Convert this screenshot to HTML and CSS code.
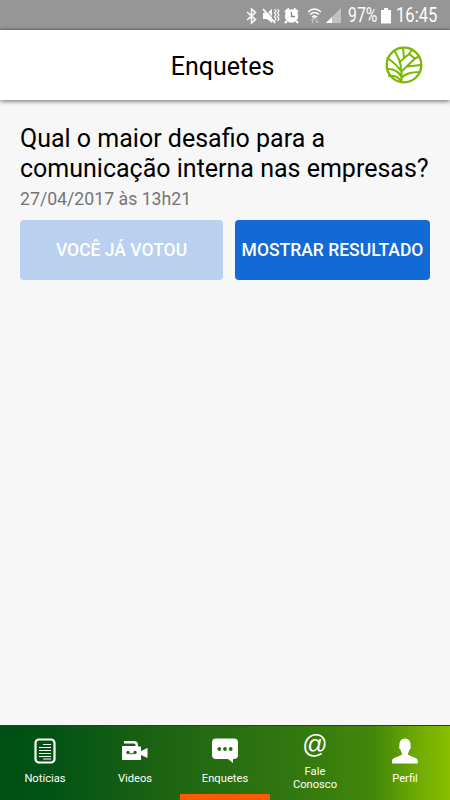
FILE: index.html
```html
<!DOCTYPE html>
<html lang="pt-BR">
<head>
<meta charset="utf-8">
<meta name="viewport" content="width=device-width, initial-scale=1">
<title>Enquetes</title>
<link rel="stylesheet" href="styles.css">
</head>
<body>
<div class="app">
  <div class="status">
    <svg class="status-icons" width="102" height="30" viewBox="0 0 102 30" fill="none" stroke="#fff">
      <path d="M7 12l8.500 7.500-4 3.500V9l4 3.500L7 20" stroke-width="1.500"/>
      <path d="M23 13h4l5-4v14l-5-4h-4z" fill="#fff" stroke="none"/>
      <path d="M24.500 8l12 14" stroke="#969696" stroke-width="1"/>
      <path d="M23 9l12 14" stroke-width="1.800"/>
      <path d="M34.500 9l1.500 2-1.500 2 1.500 2-1.500 2 1.500 2-1.500 2M37.500 9l1.500 2-1.500 2 1.500 2-1.500 2 1.500 2-1.500 2" stroke-width="1.200"/>
      <circle cx="51.500" cy="16" r="6.700" fill="#fff" stroke="none"/>
      <path d="M45 12l4-3.500M58 12l-4-3.500M47 21l-2 2M56 21l2 2" stroke-width="2"/>
      <path d="M51.500 12v4.500h3.500" stroke="#858585" stroke-width="1.300"/>
      <path d="M68 12q6.500-6 13 0M70 14.500q4.500-4 9 0M72 17q2.500-2 5 0" stroke-width="1.500"/>
      <path d="M73 17.300h3l-1.500 2z" fill="#fff" stroke="none"/>
      <path d="M72.500 23v-4M71 20.500l1.500-1.800 1.500 1.800M77 18.500v4M75.500 21l1.500 1.800 1.500-1.800" stroke="#c6c6c6" stroke-width="1"/>
      <path d="M101 8v15H86z" fill="#c2c2c2" stroke="none"/>
      <path d="M92 17v6h-6z" fill="#fff" stroke="none"/>
    </svg>
    <span class="percent">97%</span>
    <svg class="battery" width="10" height="16" viewBox="0 0 10 16"><path d="M3 0h4v2h3v13.500H0V2h3z" fill="#fff"/></svg>
    <span class="clock">16:45</span>
  </div>
  <header class="header">
    <h1>Enquetes</h1>
    <svg class="logo" width="38" height="38" viewBox="0 0 38 38" fill="none" stroke="#7ab800" stroke-width="2" stroke-linecap="round" stroke-linejoin="round">
      <circle cx="19" cy="19" r="17.300" stroke-width="2.300"/>
      <path d="M16.500 36V25.500L30 12.500 34 10.500M16.500 25.500Q10 17 2.500 12M16 24C16 16 13 11 9.500 5M14.500 16L24 8l3-4M19 12L18 2M30 12.500L24 8M22 20.500L36 19M2 23Q12 22 16.500 31M16.500 32Q21 26 35 26M4 30Q12 29 16 35"/>
    </svg>
  </header>
  <main class="content">
    <h2>Qual o maior desafio para a<br>comunicação interna nas empresas?</h2>
    <p class="date">27/04/2017 às 13h21</p>
    <div class="actions">
      <button class="btn voted" disabled>VOCÊ JÁ VOTOU</button>
      <button class="btn result">MOSTRAR RESULTADO</button>
    </div>
  </main>
  <nav class="tabs">
    <a class="tab">
      <svg width="30" height="28" viewBox="0 0 30 28" fill="none" stroke="#fff"><rect x="5.500" y="2.500" width="19" height="23" rx="3.500" stroke-width="2.200"/><path d="M13 7.500h8M9 10.500h12M9 13.500h12M9 16.500h12M9 19.500h12M13 22h8" stroke-width="1"/></svg>
      <span>Notícias</span>
    </a>
    <a class="tab">
      <svg width="30" height="28" viewBox="0 0 30 28" fill="#fff"><path d="M4 6.500V4.500q0-.5.500-.5H14q4 0 4 4v1.500h3v4.500l6.500-3v10l-6.500-3V23H2V9h13.500V8q0-1.500-1.500-1.500z"/><g fill="#20640f"><circle cx="8" cy="15.500" r="1.700"/><circle cx="15" cy="15.500" r="1.700"/><path d="M9.500 16.300h4v1h-4z"/></g></svg>
      <span>Videos</span>
    </a>
    <a class="tab active">
      <svg width="30" height="28" viewBox="0 0 30 28" fill="#fff"><path d="M6 1.500h18q4 0 4 4V18q0 4-4 4h-1v4l-5-4H6q-4 0-4-4V5.500q0-4 4-4z"/><g fill="#28710f"><circle cx="9.300" cy="12" r="1.900"/><circle cx="15" cy="12" r="1.900"/><circle cx="20.700" cy="12" r="1.900"/></g></svg>
      <span>Enquetes</span>
    </a>
    <a class="tab contact">
      <b class="at">@</b>
      <span>Fale<br>Conosco</span>
    </a>
    <a class="tab">
      <svg width="30" height="28" viewBox="0 0 30 28" fill="#fff"><path d="M15 1.500c4 0 6 3 5.500 7.500.8 1 .2 3-1 3.500-.3 2-1.500 2.800-1.500 5 2 2 9.500 3 9.800 6v3H2v-3c.3-3 8-4 10-6 0-2.200-1.200-3-1.500-5-1.200-.5-1.800-2.500-1-3.500C9 4.500 11 1.500 15 1.500z"/></svg>
      <span>Perfil</span>
    </a>
  </nav>
</div>
</body>
</html>
```
FILE: styles.css
```css
* { box-sizing: border-box; }
body { margin: 0; font-family: Roboto, "Liberation Sans", sans-serif; }
.app { width: 450px; height: 800px; display: flex; flex-direction: column; background: #f7f7f7; }
.status { height: 30px; flex: none; background: #969696; border-bottom: 1px solid #858585; display: flex; color: #fff; padding-left: 240px; font-size: 19.500px; line-height: 32px; }
.status-icons { flex: none; }
.percent { width: 30px; margin-left: 6px; transform: scaleX(.81); transform-origin: left; }
.battery { flex: none; margin: 8px 5px 0 3px; }
.clock { width: 42px; transform: scaleX(.85); transform-origin: left; }
.header { height: 70px; flex: none; background: #fff; display: grid; grid-template-columns: 1fr auto 1fr; align-items: center; box-shadow: 0 1px 5px rgba(0,0,0,.6); z-index: 1; }
.header h1 { grid-column: 2; margin: 3px 0 0; font-size: 25px; font-weight: 400; line-height: 30px; padding-right: 5px; }
.logo { justify-self: end; margin-right: 27px; }
.content { flex: 1; padding: 24px 20px 0; }
.content h2 { margin: 0; font-size: 25px; line-height: 29.500px; font-weight: 400; white-space: nowrap; }
.date { margin: 5px 0 0; font-size: 17.700px; line-height: 22px; color: #757575; }
.actions { margin-top: 10px; display: grid; grid-template-columns: 203px 195px; gap: 12px; }
.btn { height: 60px; border: 0; border-radius: 4px; padding: 0; color: #fff; font: 500 17.500px Roboto, sans-serif; white-space: nowrap; }
.voted { background: #b9d0ee; }
.result { background: #126ad7; }
.tabs { height: 75px; flex: none; display: grid; grid-template-columns: repeat(5, 90px); background: linear-gradient(90deg, #005016 0, #035315 12%, #1a6212 33%, #33790f 67%, #418709 83%, #70ab03 93%, #87be00 100%); border-top: 1px solid #114c12; }
.tab { display: flex; flex-direction: column; align-items: center; padding-top: 11px; color: #fff; font-size: 11.200px; line-height: 13px; text-align: center; }
.tab svg { flex: none; margin-bottom: 7px; }
.active { border-bottom: 6px solid #ff5a00; }
.contact { padding-top: 4px; }
.at { font-family: "Liberation Sans", sans-serif; font-size: 25px; line-height: 28px; font-weight: 400; margin-bottom: 7px; }
```
